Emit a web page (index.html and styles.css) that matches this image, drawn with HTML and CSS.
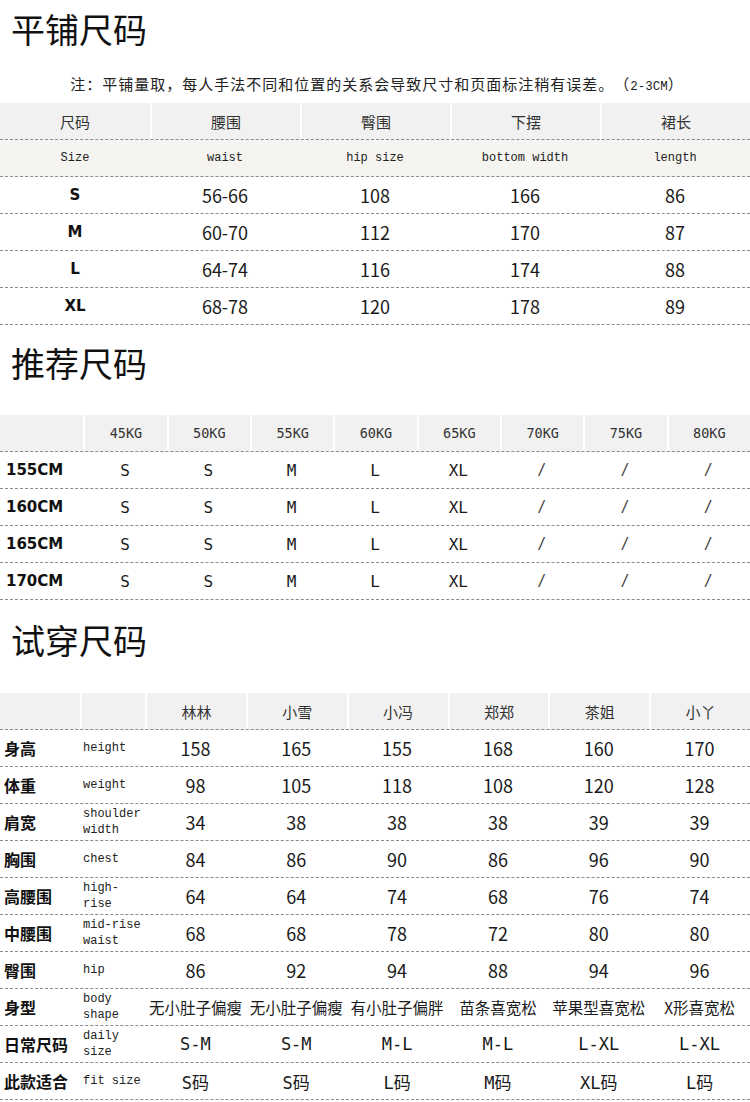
FILE: index.html
```html
<!DOCTYPE html>
<html lang="zh-CN">
<head>
<meta charset="utf-8">
<title>尺码</title>
<link rel="stylesheet" href="styles.css">
</head>
<body>
<div class="page">
  <h1 class="title t-first">平铺尺码</h1>
  <p class="note">注：平铺量取，每人手法不同和位置的关系会导致尺寸和页面标注稍有误差。（<span class="mono">2-3CM</span>）</p>

  <div class="tbl t1">
    <div class="row head">
      <div class="c">尺码</div><div class="c">腰围</div><div class="c">臀围</div><div class="c">下摆</div><div class="c">裙长</div>
    </div>
    <div class="row sub">
      <div class="c en">Size</div><div class="c en">waist</div><div class="c en">hip size</div><div class="c en">bottom width</div><div class="c en">length</div>
    </div>
    <div class="row"><div class="c lbl">S</div><div class="c num">56-66</div><div class="c num">108</div><div class="c num">166</div><div class="c num">86</div></div>
    <div class="row"><div class="c lbl">M</div><div class="c num">60-70</div><div class="c num">112</div><div class="c num">170</div><div class="c num">87</div></div>
    <div class="row"><div class="c lbl">L</div><div class="c num">64-74</div><div class="c num">116</div><div class="c num">174</div><div class="c num">88</div></div>
    <div class="row"><div class="c lbl">XL</div><div class="c num">68-78</div><div class="c num">120</div><div class="c num">178</div><div class="c num">89</div></div>
  </div>

  <h1 class="title t-second">推荐尺码</h1>

  <div class="tbl t2">
    <div class="row head">
      <div class="c"></div><div class="c">45KG</div><div class="c">50KG</div><div class="c">55KG</div><div class="c">60KG</div><div class="c">65KG</div><div class="c">70KG</div><div class="c">75KG</div><div class="c">80KG</div>
    </div>
    <div class="row"><div class="c lbl">155CM</div><div class="c">S</div><div class="c">S</div><div class="c">M</div><div class="c">L</div><div class="c">XL</div><div class="c sl">/</div><div class="c sl">/</div><div class="c sl">/</div></div>
    <div class="row"><div class="c lbl">160CM</div><div class="c">S</div><div class="c">S</div><div class="c">M</div><div class="c">L</div><div class="c">XL</div><div class="c sl">/</div><div class="c sl">/</div><div class="c sl">/</div></div>
    <div class="row"><div class="c lbl">165CM</div><div class="c">S</div><div class="c">S</div><div class="c">M</div><div class="c">L</div><div class="c">XL</div><div class="c sl">/</div><div class="c sl">/</div><div class="c sl">/</div></div>
    <div class="row"><div class="c lbl">170CM</div><div class="c">S</div><div class="c">S</div><div class="c">M</div><div class="c">L</div><div class="c">XL</div><div class="c sl">/</div><div class="c sl">/</div><div class="c sl">/</div></div>
  </div>

  <h1 class="title t-third">试穿尺码</h1>

  <div class="tbl t3">
    <div class="row head">
      <div class="c"></div><div class="c"></div><div class="c">林林</div><div class="c">小雪</div><div class="c">小冯</div><div class="c">郑郑</div><div class="c">茶姐</div><div class="c">小丫</div>
    </div>
    <div class="row"><div class="c lbl">身高</div><div class="c en">height</div><div class="c num">158</div><div class="c num">165</div><div class="c num">155</div><div class="c num">168</div><div class="c num">160</div><div class="c num">170</div></div>
    <div class="row"><div class="c lbl">体重</div><div class="c en">weight</div><div class="c num">98</div><div class="c num">105</div><div class="c num">118</div><div class="c num">108</div><div class="c num">120</div><div class="c num">128</div></div>
    <div class="row"><div class="c lbl">肩宽</div><div class="c en">shoulder<br>width</div><div class="c num">34</div><div class="c num">38</div><div class="c num">38</div><div class="c num">38</div><div class="c num">39</div><div class="c num">39</div></div>
    <div class="row"><div class="c lbl">胸围</div><div class="c en">chest</div><div class="c num">84</div><div class="c num">86</div><div class="c num">90</div><div class="c num">86</div><div class="c num">96</div><div class="c num">90</div></div>
    <div class="row"><div class="c lbl">高腰围</div><div class="c en">high-<br>rise</div><div class="c num">64</div><div class="c num">64</div><div class="c num">74</div><div class="c num">68</div><div class="c num">76</div><div class="c num">74</div></div>
    <div class="row"><div class="c lbl">中腰围</div><div class="c en">mid-rise<br>waist</div><div class="c num">68</div><div class="c num">68</div><div class="c num">78</div><div class="c num">72</div><div class="c num">80</div><div class="c num">80</div></div>
    <div class="row"><div class="c lbl">臀围</div><div class="c en">hip</div><div class="c num">86</div><div class="c num">92</div><div class="c num">94</div><div class="c num">88</div><div class="c num">94</div><div class="c num">96</div></div>
    <div class="row"><div class="c lbl">身型</div><div class="c en">body<br>shape</div><div class="c shape">无小肚子偏瘦</div><div class="c shape">无小肚子偏瘦</div><div class="c shape">有小肚子偏胖</div><div class="c shape">苗条喜宽松</div><div class="c shape">苹果型喜宽松</div><div class="c shape">X形喜宽松</div></div>
    <div class="row"><div class="c lbl">日常尺码</div><div class="c en">daily<br>size</div><div class="c cond">S-M</div><div class="c cond">S-M</div><div class="c cond">M-L</div><div class="c cond">M-L</div><div class="c cond">L-XL</div><div class="c cond">L-XL</div></div>
    <div class="row"><div class="c lbl">此款适合</div><div class="c en">fit size</div><div class="c cond">S码</div><div class="c cond">S码</div><div class="c cond">L码</div><div class="c cond">M码</div><div class="c cond">XL码</div><div class="c cond">L码</div></div>
  </div>
</div>
</body>
</html>
```

FILE: styles.css
```css
* { box-sizing: border-box; }

html, body {
  margin: 0;
  padding: 0;
  background: #fff;
}

body {
  font-family: "Noto Sans CJK SC", "Noto Sans", sans-serif;
  color: #1a1a1a;
  text-spacing-trim: space-all;
}

.page {
  width: 750px;
}

.title {
  margin: 0;
  padding-left: 11px;
  font-size: 34px;
  line-height: 40px;
  height: 40px;
  font-weight: 400;
  color: #111;
}

.t-first { margin-top: 9px; }
.t-second { margin-top: 18px; }
.t-third { margin-top: 20px; }

.note {
  margin: 25px 0 0;
  height: 20px;
  line-height: 20px;
  font-size: 15px;
  letter-spacing: 1px;
  text-align: center;
  padding-left: 4px;
  color: #222;
  white-space: nowrap;
}

.mono {
  font-family: "Liberation Mono", monospace;
  font-size: 12.5px;
  letter-spacing: 0;
}

.tbl { margin-top: 9px; }
.t2 { margin-top: 32px; }
.t3 { margin-top: 33px; }

.row {
  display: grid;
  height: 37px;
  border-bottom: 1px dashed #8c8c8c;
}

.t1 .row { grid-template-columns: repeat(5, 150px); }
.t2 .row { grid-template-columns: repeat(9, 1fr); }
.t3 .row { grid-template-columns: 80px 65px repeat(6, 1fr); }

.c {
  display: flex;
  align-items: center;
  justify-content: center;
  white-space: nowrap;
}

.head {
  background: #f1f1f1;
}

.head .c {
  font-size: 15px;
  color: #333;
}

.head .c + .c {
  border-left: 2px solid #fff;
}

.sub {
  background: #f5f4f1;
}

.en {
  font-family: "Liberation Mono", monospace;
  font-size: 12px;
  line-height: 16px;
  color: #222;
}

.t3 .en {
  justify-content: flex-start;
  padding-left: 3px;
}

.num {
  font-size: 18px;
}

.t1 .lbl {
  font-family: "DejaVu Sans", sans-serif;
  font-weight: 700;
  font-size: 15px;
  color: #111;
}

.t2 .c {
  font-family: "DejaVu Sans Mono", monospace;
  font-size: 16px;
  color: #1a1a1a;
}

.t2 .head .c {
  font-family: "DejaVu Sans Mono", monospace;
  font-size: 13.5px;
  color: #333;
}

.t2 .lbl {
  justify-content: flex-start;
  align-items: flex-start;
  padding-left: 6px;
  padding-top: 9px;
  font-family: "DejaVu Sans", sans-serif;
  font-weight: 700;
  font-size: 15px;
  color: #111;
}

.t2 .sl {
  font-size: 15px;
  color: #444;
}

.t3 .lbl {
  justify-content: flex-start;
  padding-left: 4px;
  font-weight: 700;
  font-size: 16px;
  color: #111;
}

.shape {
  font-size: 15.5px;
}

.cond {
  font-family: "DejaVu Sans Mono", "Noto Sans CJK SC", monospace;
  font-size: 17px;
}
```
